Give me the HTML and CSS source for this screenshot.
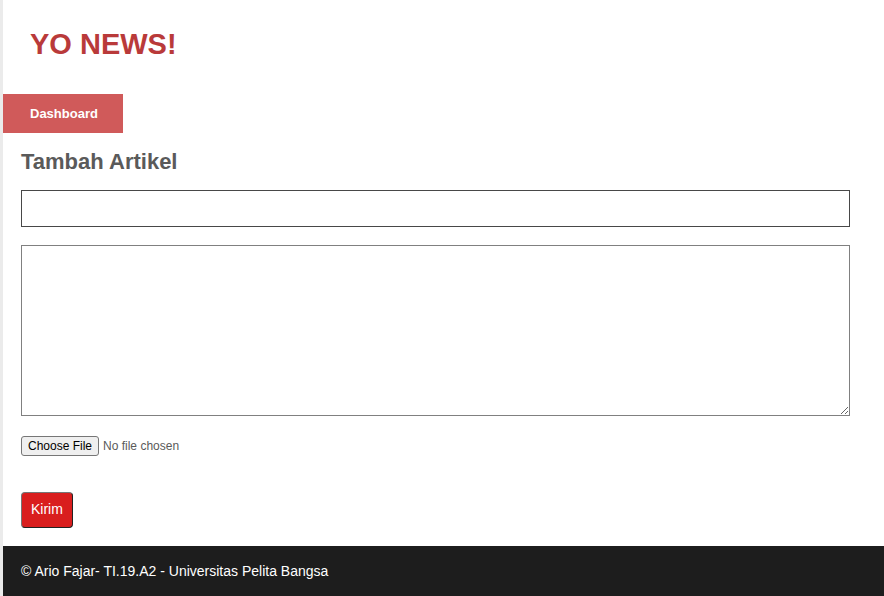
FILE: index.html
```html
<!DOCTYPE html>
<html lang="id">
<head>
<meta charset="utf-8">
<title>Yo News!</title>
<link rel="stylesheet" href="styles.css">
</head>
<body>
<div class="container">
  <header class="header"><h1>YO NEWS!</h1></header>
  <nav class="nav"><a href="#" class="active">Dashboard</a></nav>
  <main class="main">
    <h2>Tambah Artikel</h2>
    <form class="form">
      <input type="text" class="title" aria-label="Judul">
      <textarea class="content" aria-label="Isi"></textarea>
      <input type="file" class="file" aria-label="Gambar">
      <button type="submit" class="submit">Kirim</button>
    </form>
  </main>
  <footer class="footer"><p>© Ario Fajar- TI.19.A2 - Universitas Pelita Bangsa</p></footer>
</div>
</body>
</html>
```
FILE: styles.css
```css
* {
  box-sizing: border-box;
  margin: 0;
  padding: 0;
}

body {
  background: #ebebeb;
  color: #5a5a5a;
  font-family: "Liberation Sans", Arial, sans-serif;
  font-size: 14px;
}

.container {
  display: flex;
  flex-direction: column;
  min-height: 100vh;
  margin-left: 3px;
  background: #fff;
}

.header {
  padding: 26px 27px 32px;
}

.header h1 {
  color: #b93a3a;
  font-size: 29px;
  line-height: 36px;
}

.nav {
  display: flex;
}

.nav a {
  padding: 0 25px 0 27px;
  background: #d05a5a;
  color: #fff;
  font-size: 13px;
  font-weight: bold;
  line-height: 39px;
  text-decoration: none;
}

.main {
  padding: 16px 34px 18px 18px;
}

.main h2 {
  margin-bottom: 15px;
  font-size: 22px;
  line-height: 26px;
}

.form {
  display: flex;
  flex-direction: column;
  align-items: flex-start;
}

.title {
  width: 100%;
  height: 37px;
  margin-bottom: 18px;
  padding: 0 8px;
  border: 1px solid #484848;
}

.content {
  width: 100%;
  height: 171px;
  margin-bottom: 20px;
  padding: 8px;
  border: 1px solid #808080;
}

.file {
  margin-bottom: 36px;
  color: #5a5a5a;
  font-size: 12px;
}

.file::file-selector-button {
  height: 20px;
  padding: 0 6px;
  border: 1px solid #767676;
  border-radius: 3px;
  background: #efefef;
  font-size: 12px;
}

.submit {
  height: 36px;
  padding: 0 9px 2px;
  border: 1px solid;
  border-color: #767676 #222 #222 #767676;
  border-radius: 4px;
  background: #d91e1e;
  color: #fff;
  font: inherit;
}

.footer {
  flex: 1;
  padding: 16px 18px;
  background: #1d1d1d;
  color: #fff;
  line-height: 18px;
}
```
